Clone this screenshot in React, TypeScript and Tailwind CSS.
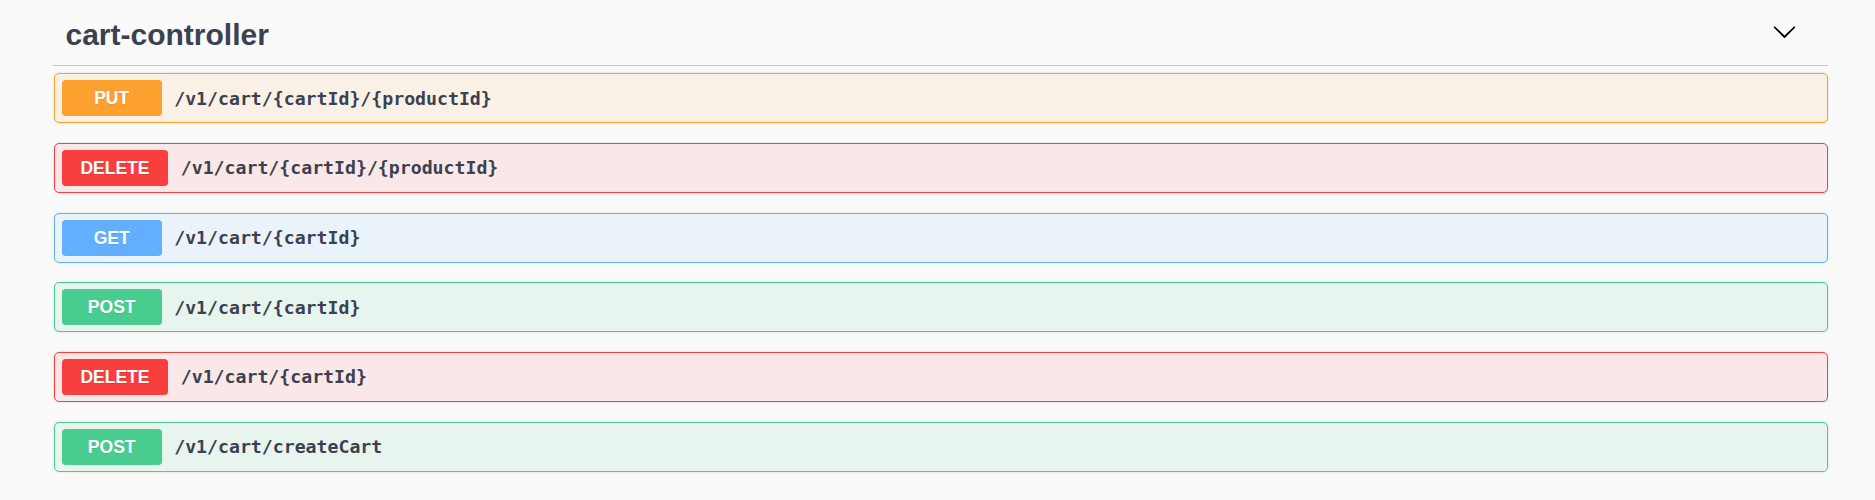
import React from "react";

type Method = "PUT" | "DELETE" | "GET" | "POST";

const methodStyles: Record<Method, { row: string; badge: string }> = {
  PUT: { row: "border-[#fca130] bg-[#faf1e6]", badge: "bg-[#fca130]" },
  DELETE: { row: "border-[#f93e3e] bg-[#fae7e7]", badge: "bg-[#f93e3e]" },
  GET: { row: "border-[#61affe] bg-[#ebf3fa]", badge: "bg-[#61affe]" },
  POST: { row: "border-[#49cc90] bg-[#e8f5ef]", badge: "bg-[#49cc90]" },
};

const operations: { method: Method; path: string }[] = [
  { method: "PUT", path: "/v1/cart/{cartId}/{productId}" },
  { method: "DELETE", path: "/v1/cart/{cartId}/{productId}" },
  { method: "GET", path: "/v1/cart/{cartId}" },
  { method: "POST", path: "/v1/cart/{cartId}" },
  { method: "DELETE", path: "/v1/cart/{cartId}" },
  { method: "POST", path: "/v1/cart/createCart" },
];

function Chevron() {
  return (
    <svg width="25" height="25" viewBox="0 0 20 20" className="mt-[1px] mr-[31px] shrink-0" fill="#000">
      <path d="M17.418 6.109c.272-.268.709-.268.979 0s.271.701 0 .969l-7.908 7.83c-.27.268-.707.268-.979 0l-7.908-7.83c-.27-.268-.27-.701 0-.969.271-.268.709-.268.979 0L10 13.25l7.418-7.141z" />
    </svg>
  );
}

export default function App() {
  return (
    <div className="min-h-[500px] w-full bg-[#fafafa]">
      <div className="ml-[53px] w-[1775px]">
        <div className="flex items-start justify-between border-b border-[#c1c4ca] pt-[17.6px] pb-[13.4px] pl-[12.5px]">
          <h3
            className="text-[30px] font-bold leading-[34px] text-[#3b4151]"
            style={{ fontFamily: '"Liberation Sans", Arial, sans-serif' }}
          >
            cart-controller
          </h3>
          <Chevron />
        </div>

        <div className="mt-[7.3px] ml-[1px] flex w-[1774px] flex-col gap-[19.7px]">
          {operations.map((op, i) => {
            const s = methodStyles[op.method];
            return (
              <div
                key={i}
                className={`flex h-[50px] items-center rounded-[5px] border px-[6.7px] shadow-[0_0_3px_rgba(0,0,0,0.12)] ${s.row}`}
              >
                <span
                  className={`flex h-[36px] min-w-[100px] items-center justify-center rounded-[3.75px] px-[18.75px] text-[17.5px] font-bold text-white [text-shadow:0_1px_0_rgba(0,0,0,0.1)] ${s.badge}`}
                  style={{ fontFamily: '"Liberation Sans", Arial, sans-serif' }}
                >
                  {op.method}
                </span>
                <span
                  className="ml-[12.5px] text-[18.2px] font-semibold text-[#3b4151]"
                  style={{ fontFamily: '"DejaVu Sans Mono", "Liberation Mono", monospace' }}
                >
                  {op.path}
                </span>
              </div>
            );
          })}
        </div>
      </div>
    </div>
  );
}
